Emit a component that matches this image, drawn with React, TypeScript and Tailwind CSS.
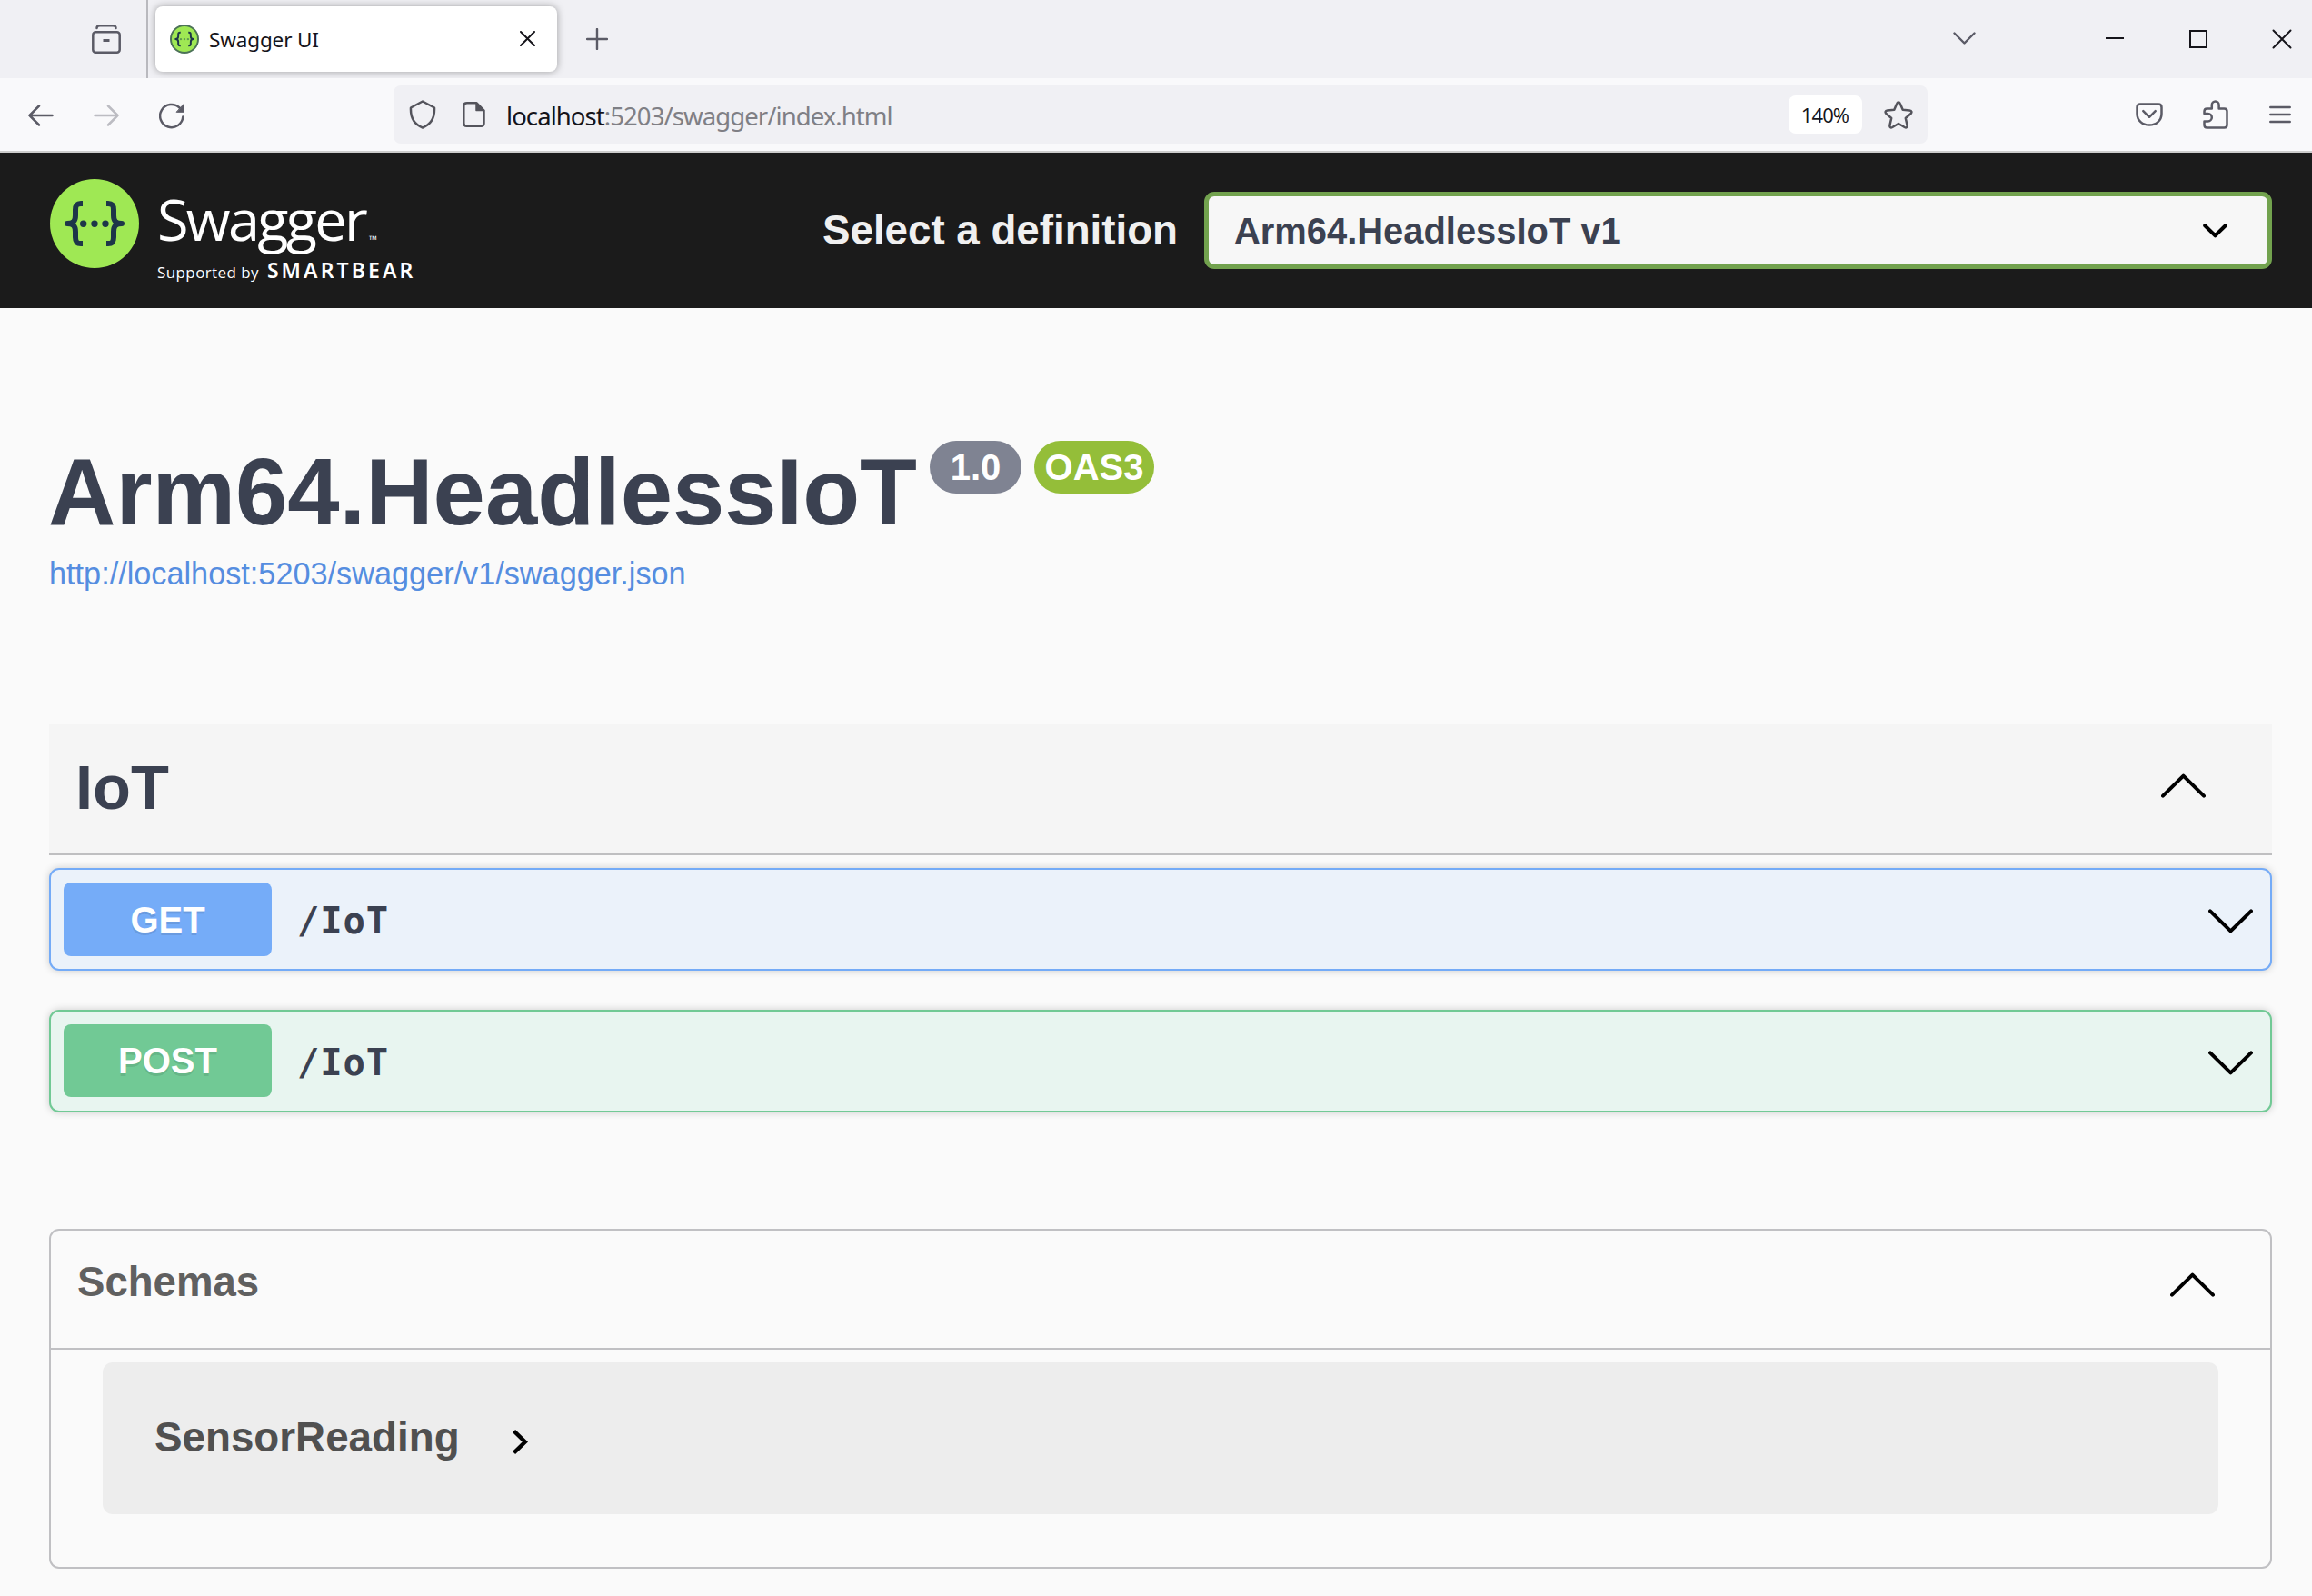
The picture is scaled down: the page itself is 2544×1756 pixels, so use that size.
import type { ReactNode } from "react";

type IconProps = { w: number; h: number; className?: string; stroke?: number; children: ReactNode };

function Icon({ w, h, className = "", stroke = 2.5, children }: IconProps) {
  return (
    <svg
      width={w}
      height={h}
      viewBox={`0 0 ${w} ${h}`}
      fill="none"
      stroke="currentColor"
      strokeWidth={stroke}
      strokeLinecap="round"
      strokeLinejoin="round"
      className={`shrink-0 ${className}`}
    >
      {children}
    </svg>
  );
}

function BigChevron({ up = false, className = "" }: { up?: boolean; className?: string }) {
  return (
    <Icon w={49} h={27} stroke={4} className={`text-black ${className}`}>
      <path d={up ? "M2 24.6 24.5 2.6 47 24.6" : "M2 2.4 24.5 24.4 47 2.4"} />
    </Icon>
  );
}

function SwaggerMark({ size, ring = false, className = "" }: { size: number; ring?: boolean; className?: string }) {
  return (
    <svg width={size} height={size} viewBox="0 0 98 98" className={`shrink-0 ${className}`}>
      <circle cx="49" cy="49" r={ring ? 46 : 49} fill="#9fe854" stroke={ring ? "#4c7258" : "none"} strokeWidth="6" />
      <g fill="none" stroke="#1d3649" strokeWidth="6" strokeLinejoin="round">
        <path d="M36 27H34C29 27 28 29.500 28 34V40C28 46 26 49 19 49C26 49 28 52 28 58V64C28 68.500 29 71 34 71H36" />
        <path d="M62 27H64C69 27 70 29.500 70 34V40C70 46 72 49 79 49C72 49 70 52 70 58V64C70 68.500 69 71 64 71H62" />
      </g>
      <g fill={ring ? "#5f9a50" : "#1d3649"}>
        <circle cx="36.700" cy="49.300" r="3.700" />
        <circle cx="49" cy="49.300" r="3.700" />
        <circle cx="61" cy="49.300" r="3.700" />
      </g>
    </svg>
  );
}

function TabStrip() {
  return (
    <div className="flex h-[86px] items-center bg-[#f0f0f4] text-[#5b5b66]">
      <div className="flex h-full w-[163px] items-center border-r-2 border-[#b9b9be] pl-[101px]">
        <Icon w={32} h={32} stroke={2.5}>
          <path d="M5.500 4C5.500 2 7 1.300 9 1.300H23C25 1.300 26.500 2 26.500 4" />
          <rect x="1.300" y="8.300" width="29.400" height="22.400" rx="3" />
          <path d="M12.500 17.500H19.500" strokeLinecap="butt" strokeWidth="3" />
        </Icon>
      </div>
      <div className="ml-2 flex h-[72px] w-[442px] items-center rounded-lg bg-white pr-6 pl-4 shadow-[0_0_8px_rgba(0,0,0,0.35)]">
        <SwaggerMark size={32} ring />
        <span className="mt-[2px] ml-[11px] font-['Noto_Sans'] text-[22.5px] leading-8 tracking-[-0.15px] whitespace-nowrap text-[#15141a]">
          Swagger UI
        </span>
        <Icon w={17} h={17} stroke={2} className="-mt-[2px] ml-auto text-[#15141a]">
          <path d="M1 1 16 16M16 1 1 16" />
        </Icon>
      </div>
      <Icon w={24} h={24} stroke={2.4} className="ml-8">
        <path d="M12 1V23M1 12H23" />
      </Icon>
      <div className="mr-[22px] ml-auto flex items-center text-[#15141a]">
        <Icon w={25} h={14} stroke={2.4} className="mr-[143px] -mt-[2px] text-[#5b5b66]">
          <path d="M1.500 1.500 12.500 12.500 23.500 1.500" />
        </Icon>
        <Icon w={20} h={4} stroke={2} className="mr-[72px]">
          <path d="M0 1H20" strokeLinecap="butt" />
        </Icon>
        <Icon w={20} h={20} stroke={2} className="mr-[71px]">
          <path d="M1 1H19V19H1Z" strokeLinejoin="miter" />
        </Icon>
        <Icon w={22} h={22} stroke={2}>
          <path d="M1.500 1.500 20.500 20.500M20.500 1.500 1.500 20.500" />
        </Icon>
      </div>
    </div>
  );
}

function Toolbar() {
  return (
    <div className="flex h-[82px] items-center border-b-2 border-[#cccccc] bg-[#f9f9fb] pr-[23px] pl-[31px] text-[#5b5b66]">
      <Icon w={28} h={24} className="mt-[2px]">
        <path d="M26.500 12H1.500M12 1.500 1.500 12 12 22.500" />
      </Icon>
      <Icon w={28} h={24} className="mt-[2px] ml-11 text-[#bcbcc2]">
        <path d="M1.500 12H26.500M16 1.500 26.500 12 16 22.500" />
      </Icon>
      <Icon w={30} h={30} className="mt-1 ml-11">
        <path d="M26.300 15.500A12.600 12.600 0 1 1 22.500 5.500" />
        <path d="M27.500 1.500V10.300H19.500Z" fill="currentColor" strokeWidth="1" />
      </Icon>
      <div className="ml-[228px] flex h-16 w-[1688px] items-center rounded-lg bg-[#f0f0f4] pr-4 pl-[17px] text-[#54545c]">
        <Icon w={30} h={32}>
          <path d="M15 1.500 28 8.500C28.500 19 25 26.500 15 30.500C5 26.500 1.500 19 2 8.500Z" />
        </Icon>
        <Icon w={25} h={28} className="ml-[29px]">
          <path d="M5 1.300H15.500L23.500 9.500V23.500Q23.500 26.700 20.500 26.700H4.500Q1.300 26.700 1.300 23.500V4.500Q1.300 1.300 5 1.300Z" />
          <path d="M15 1.500V9.500H23.500Z" fill="currentColor" strokeWidth="1.500" />
        </Icon>
        <span className="mt-[3px] ml-[23px] font-['Noto_Sans'] text-[27.5px] leading-8 tracking-[-0.93px] whitespace-nowrap text-[#7f7f85]">
          <span className="text-[#15141a]">localhost</span>:5203/swagger/index.html
        </span>
        <span className="ml-auto flex h-[42px] w-[81px] items-center justify-center rounded-lg bg-white pt-[1px] pr-[1px] font-['Open_Sans'] text-[22px] tracking-[-0.9px] text-[#15141a]">
          140%
        </span>
        <Icon w={32} h={31} className="ml-6">
          <path d="M16 1.500C16.800 1.500 17.400 2 17.800 3L20.700 9.700 28.300 10.500C30.700 10.800 31 12.500 29.500 14L23.800 19 25.500 26.600C26 29 24.600 30 22.700 29L16 25 9.300 29C7.400 30 6 29 6.500 26.600L8.200 19 2.500 14C1 12.500 1.300 10.800 3.700 10.500L11.300 9.700 14.200 3C14.600 2 15.200 1.500 16 1.500Z" />
        </Icon>
      </div>
      <div className="ml-auto flex items-center">
        <Icon w={30} h={26} className="mr-11">
          <path d="M5 1.500H25Q28.500 1.500 28.500 5V12C28.500 19.500 22.500 24.600 15 24.600S1.500 19.500 1.500 12V5Q1.500 1.500 5 1.500Z" />
          <path d="M8.300 9.200 15 15.800 21.700 9.200" />
        </Icon>
        <Icon w={28} h={32} className="mr-[45px]">
          <path d="M4.500 9.500H9.800V5.300A3.900 3.900 0 0 1 17.600 5.300V9.500H23.500Q26.500 9.500 26.500 12.500V27.500Q26.500 30.500 23.500 30.500H4.500Q1.500 30.500 1.500 27.500V23.500H5.500A4.300 4.300 0 0 0 5.500 14.900H1.500V12.500Q1.500 9.500 4.500 9.500Z" />
        </Icon>
        <Icon w={24} h={20} className="-mt-[1px]">
          <path d="M1.300 2H22.700M1.300 10H22.700M1.300 18H22.700" />
        </Icon>
      </div>
    </div>
  );
}

function Topbar() {
  return (
    <header className="flex h-[171px] items-start bg-[#1b1b1b] pr-11 pl-[55px]">
      <SwaggerMark size={98} className="mt-[29px]" />
      <div className="mt-[49px] ml-5 font-['Open_Sans'] whitespace-nowrap text-white">
        <div className="flex h-12 items-end">
          <span className="text-[63px] leading-[48px] tracking-[-2.7px]">Swagger</span>
          <span className="ml-1 translate-y-[5px] text-[12px] leading-[12px]">™</span>
        </div>
        <div className="mt-5 flex h-6 items-baseline leading-6">
          <span className="text-[17px] tracking-[0.4px]">Supported by</span>
          <span className="ml-[9px] font-['Noto_Sans'] text-[23px] font-semibold tracking-[3.1px]">SMARTBEAR</span>
        </div>
      </div>
      <div className="mt-[43px] ml-auto flex items-center">
        <label className="mr-[29px] text-[45.7px] leading-[60px] font-bold whitespace-nowrap text-[#f0f0f0]">
          Select a definition
        </label>
        <div className="flex h-[85px] w-[1175px] items-center justify-between rounded-[11px] border-[5px] border-[#72a24e] bg-[#f7f7f7] pr-11 pl-7 text-[39.9px] font-bold text-[#3b4151]">
          <span className="leading-[48px]">Arm64.HeadlessIoT v1</span>
          <Icon w={27} h={16} stroke={4} className="text-black">
            <path d="M2.200 2.200 13.500 13.300 24.800 2.200" />
          </Icon>
        </div>
      </div>
    </header>
  );
}

const operations = [
  {
    method: "GET",
    path: "/IoT",
    block: "border-[#74abf7] bg-[#ebf2fa]",
    badge: "h-[81px] bg-[#75acf8]",
  },
  {
    method: "POST",
    path: "/IoT",
    block: "border-[#71c995] bg-[#e8f5f0]",
    badge: "h-20 bg-[#71c995]",
  },
];

export default function App() {
  return (
    <div className="flex h-[1756px] w-[2544px] flex-col overflow-hidden bg-[#fafafa] font-['Liberation_Sans',sans-serif] text-[#3b4151]">
      <TabStrip />
      <Toolbar />
      <Topbar />
      <main className="pr-11 pl-[54px]">
        <section className="pt-[146px]">
          <div className="flex h-[115px] items-start">
            <h1 className="-ml-[1px] text-[103px] leading-[114px] font-bold whitespace-nowrap">Arm64.HeadlessIoT</h1>
            <span className="ml-[14px] flex h-[58px] w-[101px] items-center justify-center rounded-full bg-[#7f8392] pb-[1px] text-[40px] font-bold text-white">
              1.0
            </span>
            <span className="ml-[14px] flex h-[58px] w-[132px] items-center justify-center rounded-full bg-[#94be39] pb-[1px] text-[40px] font-bold text-white">
              OAS3
            </span>
          </div>
          <a className="mt-[11px] block text-[34.25px] leading-[40px] text-[#558de0]">
            http://localhost:5203/swagger/v1/swagger.json
          </a>
        </section>

        <section className="mt-[146px]">
          <div className="flex h-[144px] items-center justify-between border-b-2 border-[#bfbfc1] bg-[#f5f5f5] pr-[73px] pl-[29px]">
            <h2 className="-mt-[3px] text-[68.64px] leading-[80px] font-bold">IoT</h2>
            <BigChevron up className="-mt-2" />
          </div>
          <div className="mt-[14px] flex flex-col gap-[43px]">
            {operations.map((op) => (
              <div
                key={op.method}
                className={`flex h-[113px] items-start rounded-[11px] border-2 pt-[14px] pr-[19px] pl-[14px] shadow-[0_0_8px_rgba(0,0,0,0.19)] ${op.block}`}
              >
                <span
                  className={`flex w-[229px] items-center justify-center rounded-lg text-[40px] font-bold text-white [text-shadow:0_3px_0_rgba(0,0,0,0.1)] ${op.badge}`}
                >
                  {op.method}
                </span>
                <span className="ml-7 pt-1 font-['DejaVu_Sans_Mono'] text-[40.5px] leading-[76px] font-bold tracking-[0.9px]">
                  {op.path}
                </span>
                <BigChevron className="mt-[29px] ml-auto" />
              </div>
            ))}
          </div>
        </section>

        <section className="mt-32 h-[374px] rounded-[11px] border-2 border-[#c0c0c3]">
          <div className="flex h-[131px] items-center justify-between border-b-2 border-[#c0c0c3] pr-[61px] pb-[14px] pl-[29px]">
            <h4 className="-mt-[1px] text-[45.6px] leading-[56px] font-bold text-[#606060]">Schemas</h4>
            <BigChevron up className="mt-[3px]" />
          </div>
          <div className="mt-[14px] mr-[57px] ml-[57px] flex h-[167px] items-center rounded-[11px] bg-[#ededed] pl-[57px]">
            <span className="-mt-[1px] text-[45.76px] leading-[56px] font-bold text-[#505050]">SensorReading</span>
            <Icon w={18} h={29} stroke={4.5} className="mt-2 ml-[57px] text-black">
              <path d="M2.500 2.500 14.800 14.500 2.500 26.500" strokeLinecap="butt" strokeLinejoin="miter" />
            </Icon>
          </div>
        </section>
      </main>
    </div>
  );
}
